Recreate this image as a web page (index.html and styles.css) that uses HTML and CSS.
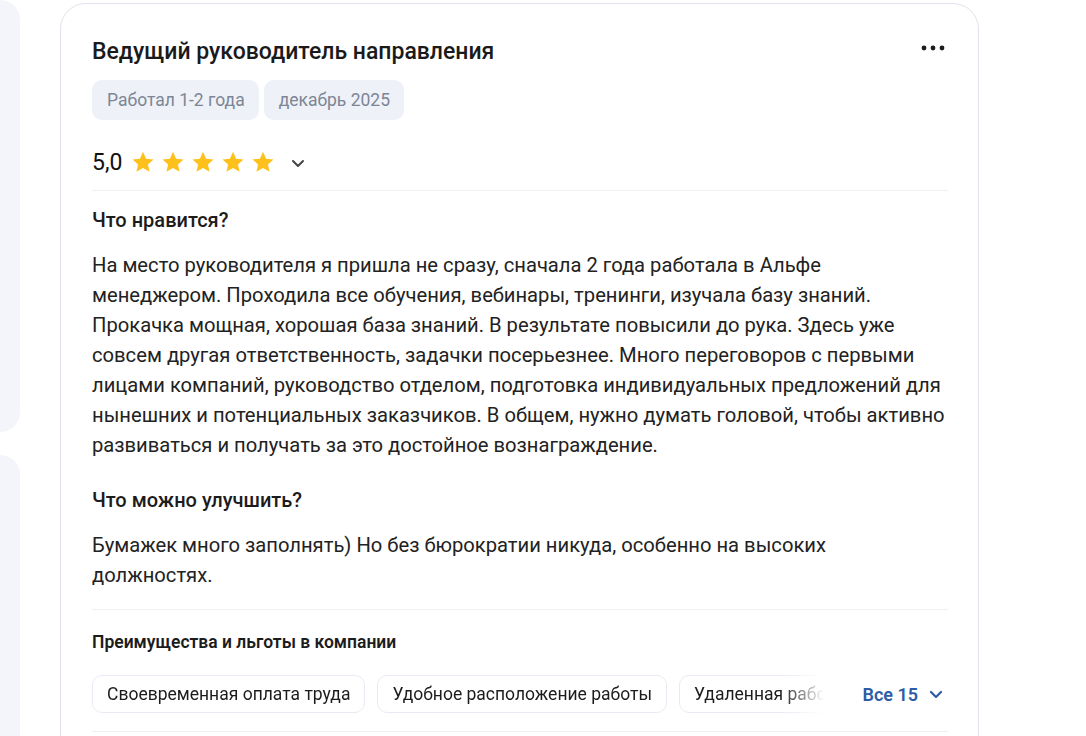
FILE: index.html
```html
<!DOCTYPE html>
<html lang="ru">
<head>
<meta charset="utf-8">
<title>Отзыв</title>
<link rel="stylesheet" href="styles.css">
</head>
<body>
<div class="page">
  <aside class="side">
    <div class="side-panel side-panel--top"></div>
    <div class="side-panel side-panel--bottom"></div>
  </aside>
  <article class="review">
    <header class="review-head">
      <h2 class="review-title">Ведущий руководитель направления</h2>
      <button class="more" aria-label="Ещё">
        <svg width="24" height="6" viewBox="0 0 24 6"><circle cx="3" cy="3" r="2.4" fill="#1c1c1c"/><circle cx="12" cy="3" r="2.4" fill="#1c1c1c"/><circle cx="21" cy="3" r="2.4" fill="#1c1c1c"/></svg>
      </button>
    </header>
    <div class="tags">
      <span class="tag">Работал 1-2 года</span>
      <span class="tag">декабрь 2025</span>
    </div>
    <div class="rating">
      <span class="rating-value">5,0</span>
      <span class="stars">
        <svg class="star" viewBox="0 0 24 24"><path d="M12 1.8l3.1 6.9 7.4.7-5.6 5 1.7 7.4L12 17.9l-6.6 3.9 1.7-7.4-5.6-5 7.4-.7z"/></svg>
        <svg class="star" viewBox="0 0 24 24"><path d="M12 1.8l3.1 6.9 7.4.7-5.6 5 1.7 7.4L12 17.9l-6.6 3.9 1.7-7.4-5.6-5 7.4-.7z"/></svg>
        <svg class="star" viewBox="0 0 24 24"><path d="M12 1.8l3.1 6.9 7.4.7-5.6 5 1.7 7.4L12 17.9l-6.6 3.9 1.7-7.4-5.6-5 7.4-.7z"/></svg>
        <svg class="star" viewBox="0 0 24 24"><path d="M12 1.8l3.1 6.9 7.4.7-5.6 5 1.7 7.4L12 17.9l-6.6 3.9 1.7-7.4-5.6-5 7.4-.7z"/></svg>
        <svg class="star" viewBox="0 0 24 24"><path d="M12 1.8l3.1 6.9 7.4.7-5.6 5 1.7 7.4L12 17.9l-6.6 3.9 1.7-7.4-5.6-5 7.4-.7z"/></svg>
      </span>
      <svg class="rating-chevron" width="14" height="9" viewBox="0 0 14 9"><path d="M2 2l5 5 5-5" fill="none" stroke="#444" stroke-width="2" stroke-linecap="round" stroke-linejoin="round"/></svg>
    </div>
    <hr class="divider">
    <section class="block">
      <h3 class="block-title">Что нравится?</h3>
      <p class="block-text">На место руководителя я пришла не сразу, сначала 2 года работала в Альфе<br>менеджером. Проходила все обучения, вебинары, тренинги, изучала базу знаний.<br>Прокачка мощная, хорошая база знаний. В результате повысили до рука. Здесь уже<br>совсем другая ответственность, задачки посерьезнее. Много переговоров с первыми<br>лицами компаний, руководство отделом, подготовка индивидуальных предложений для<br>нынешних и потенциальных заказчиков. В общем, нужно думать головой, чтобы активно<br>развиваться и получать за это достойное вознаграждение.</p>
    </section>
    <section class="block block--second">
      <h3 class="block-title">Что можно улучшить?</h3>
      <p class="block-text">Бумажек много заполнять) Но без бюрократии никуда, особенно на высоких<br>должностях.</p>
    </section>
    <hr class="divider divider--benefits">
    <section class="benefits">
      <h3 class="benefits-title">Преимущества и льготы в компании</h3>
      <div class="benefits-row">
        <div class="chips">
          <span class="chip">Своевременная оплата труда</span>
          <span class="chip">Удобное расположение работы</span>
          <span class="chip">Удаленная работа</span>
        </div>
        <button class="all-btn">Все 15
          <svg width="14" height="9" viewBox="0 0 14 9"><path d="M2 2l5 5 5-5" fill="none" stroke="#2d5ca6" stroke-width="2.2" stroke-linecap="round" stroke-linejoin="round"/></svg>
        </button>
      </div>
    </section>
    <hr class="divider divider--last">
  </article>
</div>
</body>
</html>
```

FILE: styles.css
```css
* { box-sizing: border-box; }
html, body { margin: 0; padding: 0; background: #fff; }
body {
  font-family: Roboto, "Noto Sans", "Liberation Sans", sans-serif;
  color: #1f1f1f;
  overflow: hidden;
  height: 736px;
}
.page {
  display: flex;
  align-items: flex-start;
  padding-top: 3px;
}
.side {
  width: 20px;
  flex: none;
  display: flex;
  flex-direction: column;
  gap: 23px;
  margin-top: -3px;
}
.side-panel {
  background: #f4f5fa;
  border-radius: 0 20px 20px 0;
}
.side-panel--top { height: 432px; }
.side-panel--bottom { height: 300px; }
.review {
  margin-left: 40px;
  width: 919px;
  height: 800px;
  border: 1px solid #e0e3eb;
  border-radius: 26px;
  padding: 34px 30px 0 31px;
  background: #fff;
}
.review-head {
  display: flex;
  align-items: center;
  justify-content: space-between;
}
.review-title {
  margin: 0;
  font-size: 23px;
  line-height: 28px;
  font-weight: 500;
  color: #1a1a1a;
}
.more {
  border: 0;
  background: none;
  padding: 0;
  margin-right: 3px;
  margin-top: -8px;
  display: flex;
  cursor: pointer;
}
.tags {
  display: flex;
  gap: 5px;
  margin-top: 14px;
}
.tag {
  background: #eef1f7;
  color: #7c8696;
  font-size: 17.5px;
  line-height: 40px;
  height: 40px;
  padding: 0 14px 0 15px;
  border-radius: 10px;
}
.rating {
  display: flex;
  align-items: center;
  height: 28px;
  margin-top: 28px;
}
.rating-value {
  font-size: 23px;
  font-weight: 400;
  color: #111;
  margin-right: 9px;
}
.stars {
  display: flex;
  gap: 6px;
}
.star {
  width: 24px;
  height: 24px;
  fill: #fec11c;
}
.rating-chevron {
  margin-left: 16px;
  margin-top: 2px;
}
.divider {
  border: 0;
  border-top: 1px solid #eff1f5;
  margin: 14px 0 0;
}
.block { margin-top: 17px; }
.block--second { margin-top: 28px; }
.block-title {
  margin: 0;
  font-size: 20px;
  line-height: 24px;
  font-weight: 500;
  color: #1c1c1c;
}
.block-text {
  margin: 18px 0 0;
  font-size: 20.2px;
  line-height: 30px;
  color: #222;
  white-space: nowrap;
}
.divider--benefits { margin-top: 19px; }
.benefits { margin-top: 22px; }
.benefits-title {
  margin: 0;
  font-size: 17.5px;
  line-height: 20px;
  font-weight: 600;
  color: #1c1c1c;
}
.benefits-row {
  display: flex;
  align-items: center;
  margin-top: 23px;
}
.chips {
  display: flex;
  gap: 12px;
  width: 732px;
  flex: none;
  overflow: hidden;
  -webkit-mask-image: linear-gradient(to right, #000 690px, transparent 732px);
  mask-image: linear-gradient(to right, #000 690px, transparent 732px);
}
.chip {
  flex: none;
  border: 1px solid #e8ebf3;
  border-radius: 10px;
  height: 38px;
  line-height: 36px;
  padding: 0 14px;
  font-size: 17.5px;
  color: #1c1c1c;
  white-space: nowrap;
}
.all-btn {
  margin-left: auto;
  margin-right: 5px;
  display: flex;
  align-items: center;
  gap: 11px;
  border: 0;
  background: none;
  padding: 0;
  font-family: inherit;
  font-size: 18px;
  font-weight: 600;
  color: #2d5ca6;
  cursor: pointer;
}
.divider--last { margin-top: 18px; }
```
